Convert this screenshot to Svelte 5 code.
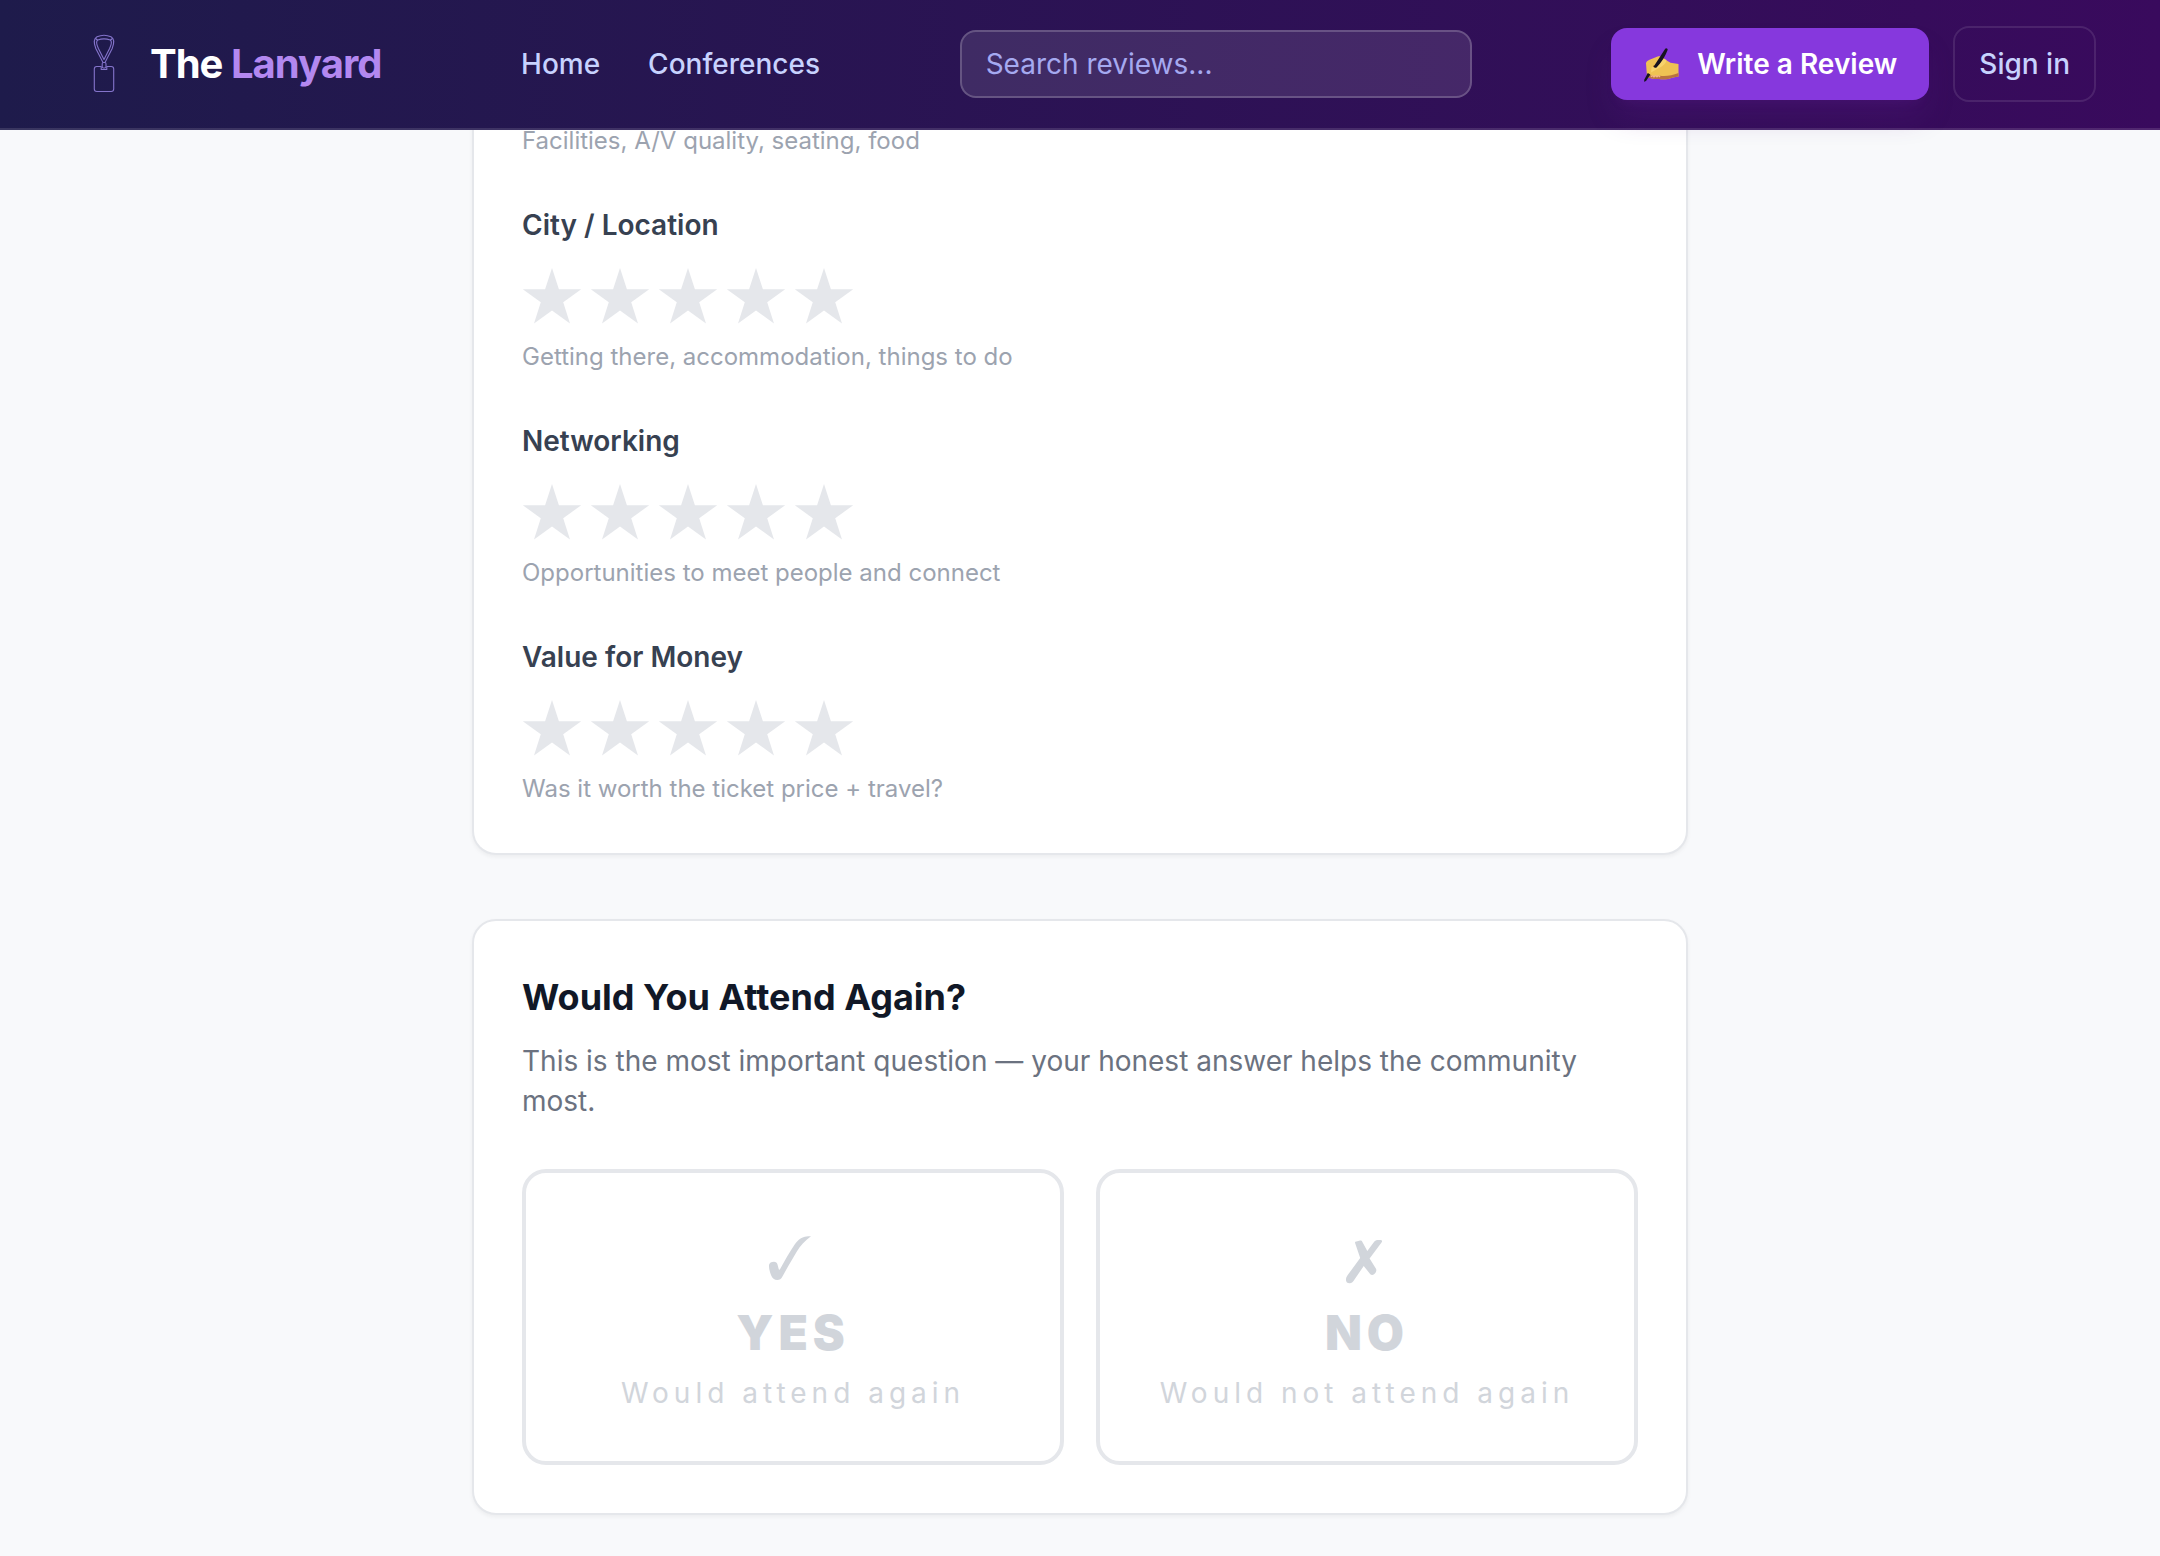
<script>
  const stars = [1, 2, 3, 4, 5];
  const categories = [
    { name: 'City / Location', hint: 'Getting there, accommodation, things to do' },
    { name: 'Networking', hint: 'Opportunities to meet people and connect' },
    { name: 'Value for Money', hint: 'Was it worth the ticket price + travel?' }
  ];

  let ratings = $state({});
  let answer = $state('');
</script>

<header class="topbar">
  <a class="brand" href="/">
    <svg class="logo" viewBox="0 0 80 80" fill="none" stroke="#8474cb" stroke-width="1.1" stroke-linejoin="round" aria-hidden="true">
      <path d="M39 38.5 31.8 24.5C29.2 18 30 14.5 33 12.8 37 11 43 11 47 12.8c3 1.700 3.800 5.200 1.200 11.700L41 38.500" />
      <path d="M40 35.500 34.400 24.500C32 19.500 32.300 17 33.800 16c3.700-1.300 8.700-1.300 12.400 0 1.500 1 1.800 3.500-.6 8.500z" />
      <path d="M31.500 14c.3 1.200 1.200 1.800 2.300 2M48.500 14c-.3 1.200-1.200 1.800-2.300 2" />
      <rect x="38.200" y="38.500" width="3.800" height="5.500" rx="1.200" />
      <path d="M37.200 42.300v3.200h5.600v-3.200" />
      <path d="M37.200 42.500h-4.400a2.500 2.500 0 0 0-2.500 2.500v20a2.500 2.500 0 0 0 2.500 2.500h14.400a2.500 2.500 0 0 0 2.500-2.500V45a2.500 2.500 0 0 0-2.500-2.500h-4.400" />
    </svg>
    <span class="brand-name">The <span class="brand-accent">Lanyard</span></span>
  </a>

  <nav class="links" aria-label="Main">
    <a href="/home">Home</a>
    <a href="/conferences">Conferences</a>
  </nav>

  <input class="search" type="search" placeholder="Search reviews..." aria-label="Search reviews" />

  <div class="actions">
    <a class="write" href="/review">
      <svg class="hand" viewBox="0 0 36 36" aria-hidden="true">
        <path d="M3 17.500C3 15.800 4.600 14.600 6.500 13.800L14 10.800c2.500-.9 4.800-.5 6 .8l2 1.900 5.500 3.200 8 1.300v12.500l-5.500 1c-4.500 1.800-9.500 2.200-14 1.500-4.500.2-8.500-.4-12-2.500z" fill="#efc253" />
        <path d="M4 27.500c4 2.800 9 3 13 2.200 6 .9 12-.3 18.500-2.700v3.500l-5.500 1c-4.500 1.800-9.500 2.200-14 1.500-4.500.2-8.500-.4-11.500-2z" fill="#b9733f" />
        <path d="M8 30.800q1.500-2 3 0 1.500-2 3 0 1.500-1.800 3 .2" fill="none" stroke="#f4b48a" stroke-width="1.300" />
        <path d="M8.500 21.500 16.500 17l4-4.500 3 1.500c-.4 3.500-3.500 6-7.500 8L8 26.500z" fill="#f7d36c" />
        <path d="M10 20.500c2.800-.2 4.800-1.500 6.500-3.500" fill="none" stroke="#a9681f" stroke-width="1.400" />
        <path d="M22.200 2.800c.6-1.300 3-.3 2.400 1.200-2 5.500-5.600 12-10.800 17.200-1.300 1.200-3.600.2-2.600-1.500z" fill="#16131f" />
        <path d="m4.800 27 2.600 1.600L3 35l-2 .8.400-2.400z" fill="#16131f" />
      </svg>
      <span>Write a Review</span>
    </a>
    <a class="signin" href="/signin">Sign in</a>
  </div>
</header>

<main class="page">
  <section class="card ratings" aria-label="Ratings">
    <p class="hint">Facilities, A/V quality, seating, food</p>
    {#each categories as category}
      <fieldset class="rating">
        <legend>{category.name}</legend>
        <div class="stars">
          {#each stars as n}
            <button
              type="button"
              class="star"
              class:on={(ratings[category.name] ?? 0) >= n}
              aria-label={`${category.name}: ${n} of 5`}
              onclick={() => (ratings[category.name] = n)}
            >
              <svg viewBox="0 0 64 72" aria-hidden="true">
                <path d="M30 7 36.900 28.200H59.200L41.200 41.300 48 62.500 30 49.400 12 62.500 18.800 41.300.8 28.200H23.100z" />
              </svg>
            </button>
          {/each}
        </div>
        <p class="hint">{category.hint}</p>
      </fieldset>
    {/each}
  </section>

  <section class="card again">
    <h2>Would You Attend Again?</h2>
    <p class="lead">This is the most important question — your honest answer helps the community most.</p>
    <div class="choices">
      <button type="button" class="choice" class:picked={answer === 'yes'} onclick={() => (answer = 'yes')}>
        <svg class="mark" viewBox="0 0 72 72" aria-hidden="true">
          <path d="M54 15.300C51.500 15.200 48.500 15.400 46.300 16.300 43 17.600 40.500 19.600 38 23 32.500 31 27.500 40 23 48.300c-.5.8-1 .5-1.300-.4L20.500 43.500C20 41.500 18.800 40.700 17 40.700c-2.600 0-4.700 1.200-5 3.300-.2 3.200.7 6.500 2 10 1.200 3.300 3.500 5 6.300 5 2.200 0 3.900-1 5-3.300L31.300 45 39.700 30.700C43 25 48 19.500 54 15.300z" />
        </svg>
        <span class="word">YES</span>
        <span class="note">Would attend again</span>
      </button>
      <button type="button" class="choice" class:picked={answer === 'no'} onclick={() => (answer = 'no')}>
        <svg class="mark" viewBox="0 0 72 72" aria-hidden="true">
          <path d="M24 21.800C23.800 20.900 24.600 20.400 25.500 20.400L29 19.600c1.200-.1 1.900.3 2.400 1.300L36.300 30 43 21c1.100-1.500 2.500-2 4.200-2h2c1.800 0 2.400 1 1.300 2.600L38.600 37.500 45 47.800c.7 1.300.2 2.700-.5 4-1 1.900-3.700 2.900-5.200 1.400L32.700 45 23.500 58.600c-1.300 2.300-2.900 3.800-5 3.700-2.200-.1-3.600-1.600-3.500-3.600 0-1.800.6-3 1.700-4.600L29.200 37z" />
        </svg>
        <span class="word">NO</span>
        <span class="note">Would not attend again</span>
      </button>
    </div>
  </section>
</main>

<style>
  :global(body) {
    margin: 0;
    background: #f8f9fb;
    color: #111827;
    font-family: Inter, "Liberation Sans", sans-serif;
    font-size: 28px;
    line-height: 40px;
  }

  .topbar {
    position: sticky;
    top: 0;
    z-index: 10;
    display: flex;
    align-items: center;
    justify-content: space-between;
    box-sizing: border-box;
    height: 130px;
    padding: 0 64px;
    border-bottom: 2px solid rgba(255, 255, 255, 0.12);
    background: linear-gradient(to right, #1e1b4b, #390a5d) border-box;
  }

  a {
    color: inherit;
    text-decoration: none;
  }

  .brand {
    display: flex;
    align-items: center;
    gap: 6px;
    color: #fff;
  }

  .logo {
    width: 80px;
    height: 80px;
  }

  .brand-name {
    font-size: 40px;
    font-weight: 700;
    line-height: 56px;
    letter-spacing: -1px;
  }

  .brand-accent {
    color: #b388f0;
  }

  .links {
    display: flex;
    gap: 48px;
    color: #c7d2fe;
    font-weight: 500;
  }

  .search {
    box-sizing: border-box;
    width: 512px;
    padding: 12px 24px;
    border: 2px solid rgba(255, 255, 255, 0.2);
    border-radius: 16px;
    background: rgba(255, 255, 255, 0.1);
    color: #fff;
    font: inherit;
    appearance: none;
  }

  .search::placeholder {
    color: #a5a9f0;
    opacity: 1;
  }

  .actions {
    display: flex;
    align-items: center;
    gap: 24px;
  }

  .write {
    display: flex;
    align-items: center;
    gap: 18px;
    padding: 16px 32px;
    border-radius: 16px;
    background: #8638dd;
    box-shadow: 0 20px 30px -6px rgba(88, 28, 135, 0.3), 0 8px 12px -8px rgba(88, 28, 135, 0.3);
    color: #fff;
    font-weight: 600;
  }

  .hand {
    width: 36px;
    height: 36px;
  }

  .signin {
    padding: 16px 24px;
    border: 2px solid rgba(255, 255, 255, 0.1);
    border-radius: 16px;
    color: #c7d2fe;
    font-weight: 500;
  }

  .page {
    display: flex;
    flex-direction: column;
    gap: 64px;
    box-sizing: border-box;
    max-width: 1280px;
    margin: -5px auto 0;
    padding: 0 32px 40px;
  }

  .card {
    padding: 48px;
    border: 2px solid #e5e7eb;
    border-radius: 24px;
    background: #fff;
    box-shadow: 0 2px 4px rgba(0, 0, 0, 0.05);
  }

  .ratings {
    display: flex;
    flex-direction: column;
    gap: 48px;
    padding-top: 0;
    border-top: 0;
    border-top-left-radius: 0;
    border-top-right-radius: 0;
  }

  .rating {
    min-width: 0;
    margin: 0;
    padding: 0;
    border: 0;
  }

  legend {
    padding: 0;
    color: #374151;
    font-weight: 600;
  }

  .stars {
    display: flex;
    gap: 4px;
    margin: 16px 0 8px;
  }

  .star {
    width: 64px;
    height: 72px;
    padding: 0;
    border: 0;
    background: none;
    color: #e5e7eb;
    cursor: pointer;
  }

  .star.on {
    color: #facc15;
  }

  .star svg {
    display: block;
    fill: currentColor;
  }

  .hint {
    margin: 0;
    color: #9ca3af;
    font-size: 24px;
    line-height: 32px;
  }

  h2 {
    margin: 0 0 16px;
    font-size: 36px;
    font-weight: 700;
    line-height: 56px;
  }

  .lead {
    margin: 0 0 48px;
    color: #6b7280;
  }

  .choices {
    display: grid;
    grid-template-columns: 1fr 1fr;
    gap: 32px;
  }

  .choice {
    display: flex;
    flex-direction: column;
    align-items: center;
    gap: 8px;
    padding: 48px 32px;
    border: 4px solid #e5e7eb;
    border-radius: 24px;
    background: #fff;
    color: #d1d5db;
    font: inherit;
    letter-spacing: 5px;
    cursor: pointer;
  }

  .choice.picked {
    border-color: #8638dd;
    color: #8638dd;
  }

  .mark {
    width: 72px;
    height: 72px;
    fill: currentColor;
  }

  .word {
    font-size: 48px;
    font-weight: 900;
    line-height: 64px;
  }
</style>
